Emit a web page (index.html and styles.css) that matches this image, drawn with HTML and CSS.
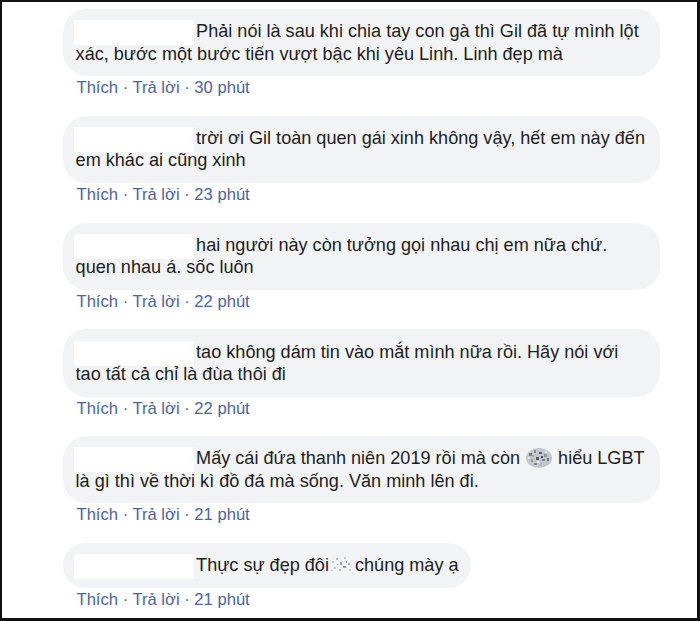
FILE: index.html
```html
<!DOCTYPE html>
<html lang="vi">
<head>
    <meta charset="UTF-8">
    <meta name="viewport" content="width=device-width, initial-scale=1.0">
    <title>Bình luận</title>
    <link rel="stylesheet" href="styles.css">
</head>
<body>
    <div class="frame">
        <div class="comment">
            <div class="bubble wide">
                <span class="name"></span>Phải nói là sau khi chia tay con gà thì Gil đã tự mình lột<br>xác, bước một bước tiến vượt bậc khi yêu Linh. Linh đẹp mà
            </div>
            <div class="meta"><a href="#">Thích</a> · <a href="#">Trả lời</a> · <span class="time">30 phút</span></div>
        </div>

        <div class="comment">
            <div class="bubble wide">
                <span class="name"></span>trời ơi Gil toàn quen gái xinh không vậy, hết em này đến<br>em khác ai cũng xinh
            </div>
            <div class="meta"><a href="#">Thích</a> · <a href="#">Trả lời</a> · <span class="time">23 phút</span></div>
        </div>

        <div class="comment">
            <div class="bubble wide">
                <span class="name"></span>hai người này còn tưởng gọi nhau chị em nữa chứ.<br>quen nhau á. sốc luôn
            </div>
            <div class="meta"><a href="#">Thích</a> · <a href="#">Trả lời</a> · <span class="time">22 phút</span></div>
        </div>

        <div class="comment">
            <div class="bubble wide">
                <span class="name"></span>tao không dám tin vào mắt mình nữa rồi. Hãy nói với<br>tao tất cả chỉ là đùa thôi đi
            </div>
            <div class="meta"><a href="#">Thích</a> · <a href="#">Trả lời</a> · <span class="time">22 phút</span></div>
        </div>

        <div class="comment">
            <div class="bubble wide">
                <span class="name"></span>Mấy cái đứa thanh niên 2019 rồi mà còn <svg class="blur" width="28" height="22" viewBox="0 0 28 22"><ellipse cx="14" cy="11" rx="13" ry="10" fill="#c3c7ce"/><rect x="4" y="6" width="3" height="3" fill="#6f7a8e"/><rect x="9" y="3" width="2" height="3" fill="#a0876a"/><rect x="14" y="5" width="3" height="2" fill="#55627a"/><rect x="19" y="7" width="3" height="3" fill="#8e97a8"/><rect x="6" y="12" width="2" height="3" fill="#b39a74"/><rect x="11" y="10" width="3" height="3" fill="#4f5b6e"/><rect x="17" y="12" width="3" height="2" fill="#96806a"/><rect x="22" y="11" width="2" height="3" fill="#6d7788"/><rect x="9" y="16" width="3" height="2" fill="#7e8898"/><rect x="15" y="16" width="2" height="3" fill="#a9b0bc"/><rect x="3" y="10" width="2" height="2" fill="#e3e5e9"/><rect x="12" y="14" width="2" height="2" fill="#eef0f3"/><rect x="20" y="4" width="2" height="2" fill="#e6e8ec"/><rect x="16" y="9" width="2" height="2" fill="#3f4b60"/><rect x="7" y="8" width="2" height="2" fill="#c7a77a"/></svg> hiểu LGBT<br>là gì thì về thời kì đồ đá mà sống. Văn minh lên đi.
            </div>
            <div class="meta"><a href="#">Thích</a> · <a href="#">Trả lời</a> · <span class="time">21 phút</span></div>
        </div>

        <div class="comment">
            <div class="bubble">
                <span class="name"></span>Thực sự đẹp đôi<svg class="blur light" width="26" height="22" viewBox="0 0 26 22"><rect x="3" y="7" width="2" height="2" fill="#b8c0cc"/><rect x="7" y="4" width="2" height="2" fill="#c9b8a4"/><rect x="11" y="8" width="2" height="3" fill="#9aa6b8"/><rect x="15" y="3" width="2" height="2" fill="#c2c8d2"/><rect x="19" y="9" width="2" height="2" fill="#aeb6c4"/><rect x="5" y="13" width="2" height="2" fill="#d0c4b4"/><rect x="10" y="15" width="2" height="2" fill="#b4bcc8"/><rect x="14" y="12" width="3" height="2" fill="#8f9bb0"/><rect x="20" y="15" width="2" height="2" fill="#c6ccd6"/><rect x="8" y="10" width="1" height="1" fill="#7f8a9c"/><rect x="17" y="7" width="1" height="2" fill="#a3aab8"/><rect x="2" y="16" width="2" height="1" fill="#ccd2da"/></svg>chúng mày ạ
            </div>
            <div class="meta"><a href="#">Thích</a> · <a href="#">Trả lời</a> · <span class="time">21 phút</span></div>
        </div>
    </div>
</body>
</html>
```

FILE: styles.css
```css
body {
    margin: 0;
    padding: 0;
    background-color: #fff;
    font-family: 'Liberation Sans', Arial, sans-serif;
}

.frame {
    box-sizing: border-box;
    width: 700px;
    height: 621px;
    padding: 7px 0 0 61px;
    border: 2px solid #111;
    border-right-width: 3px;
    border-bottom-width: 3px;
    overflow: hidden;
}

.comment {
    margin-bottom: 17.6px;
}

.bubble {
    display: inline-block;
    box-sizing: border-box;
    max-width: 597px;
    padding: 11.2px 12.6px;
    background-color: #f2f3f5;
    border-radius: 24px;
    color: #1c1e21;
    font-size: 18.1px;
    line-height: 22.4px;
}

.bubble.wide {
    width: 597px;
}

.name {
    display: inline-block;
    width: 120px;
    height: 25px;
    margin: 0 2px -2.6px -1.5px;
    vertical-align: top;
    background-color: #fff;
}

.blur {
    vertical-align: -5px;
}

.meta {
    margin-top: 2px;
    padding-left: 13.5px;
    font-size: 16.6px;
    line-height: 20px;
    color: #606770;
}

.meta a {
    color: #4b64a0;
    text-decoration: none;
}

.meta .time {
    color: #4b64a0;
}
```
